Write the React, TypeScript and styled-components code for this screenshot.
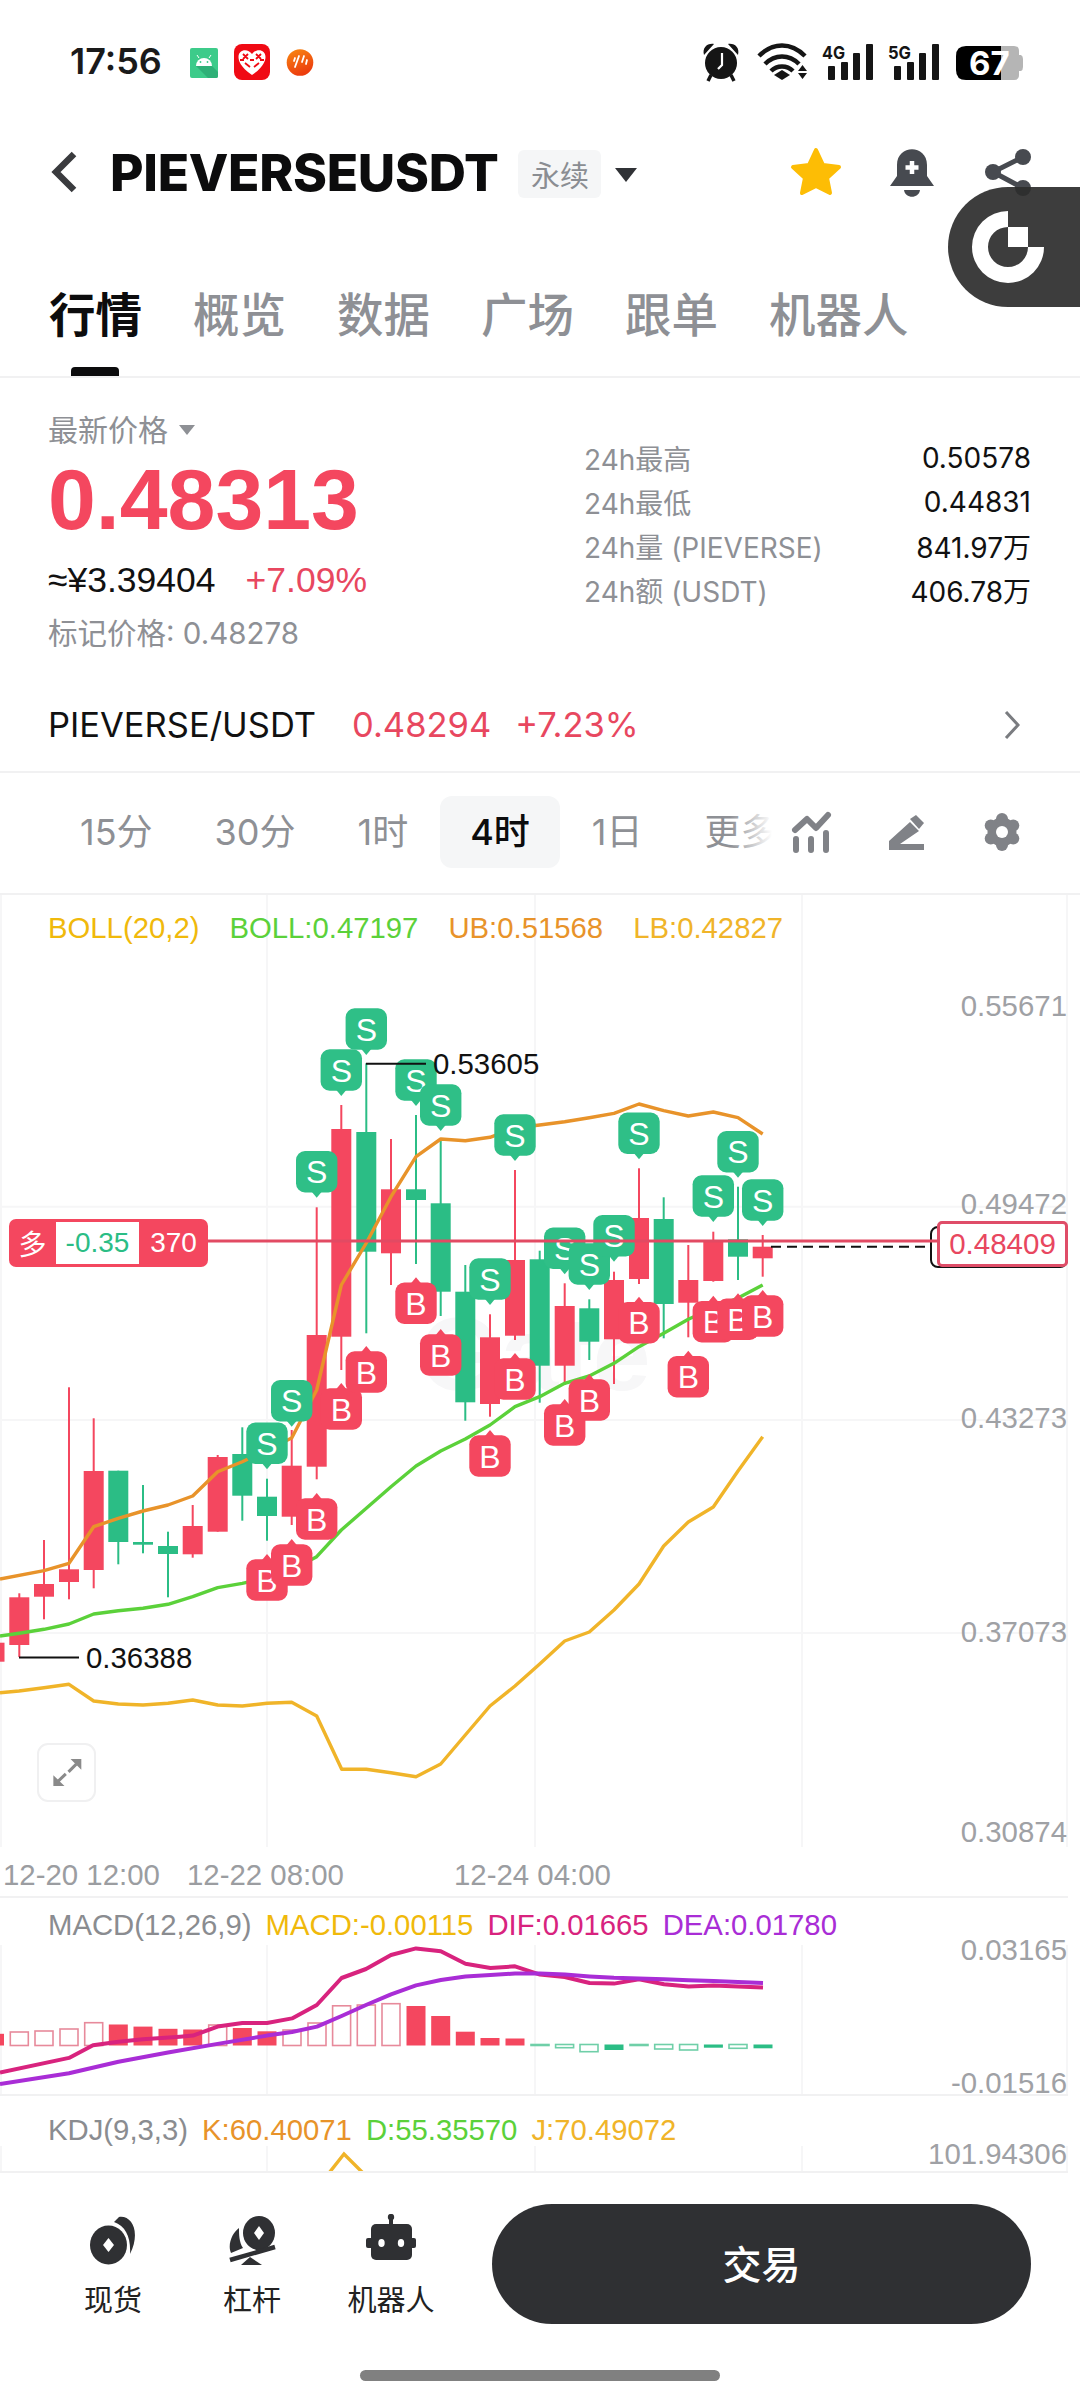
import React from 'react';
import styled, { createGlobalStyle } from 'styled-components';

const FONT = `Inter, 'Noto Sans CJK SC', sans-serif`;
const CHART_FONT = `'Liberation Sans', 'Noto Sans CJK SC', sans-serif`;
const RED = '#f4475f';
const TEXT_RED = '#e8475f';
const GREEN = '#2bbd85';
const GRAY = '#8e9095';
const LINE = '#f1f1f2';
const ORANGE = '#e8932a';
const LIME = '#5bd13a';
const YELLOW = '#f0b429';
const PINK = '#d8237e';
const PURPLE = '#a92dd6';

const GlobalStyle = createGlobalStyle`
    html, body {
        margin: 0;
        padding: 0;
        background: #fff;
    }
    * {
        box-sizing: border-box;
    }
`;

const Page = styled.div`
    position: relative;
    width: 1080px;
    height: 2400px;
    overflow: hidden;
    background: #fff;
    font-family: ${FONT};
    color: #111;
`;

const StatusBar = styled.div`
    height: 122px;
`;
const Icons = styled.svg`
    display: block;
    text {
        font-family: ${FONT};
    }
`;

const Header = styled.div`
    height: 100px;
    display: flex;
    align-items: center;
    padding-left: 48px;
`;
const Symbol = styled.div`
    margin-left: 32px;
    font-size: 51.5px;
    font-weight: 800;
    letter-spacing: -0.3px;
    color: #0c0c0d;
`;
const Tag = styled.div`
    margin: 4px 0 0 20px;
    width: 83px;
    height: 48px;
    display: flex;
    align-items: center;
    justify-content: center;
    border-radius: 6px;
    background: #f5f6f7;
    color: #8a8d92;
    font-size: 29px;
`;
const Caret = styled.div<{ $size: number; $color: string }>`
    width: 0;
    height: 0;
    border-left: ${p => p.$size}px solid transparent;
    border-right: ${p => p.$size}px solid transparent;
    border-top: ${p => p.$size * 1.25}px solid ${p => p.$color};
`;
const TagCaret = styled(Caret)`
    margin: 6px 0 0 14px;
`;
const HeaderActions = styled.div`
    margin-left: auto;
`;

const Widget = styled.div`
    position: absolute;
    right: 0;
    top: 187px;
    width: 132px;
    height: 120px;
    border-radius: 60px 0 0 60px;
    background: rgba(44, 44, 45, 0.92);
`;

const Tabs = styled.div`
    height: 156px;
    display: flex;
    gap: 51px;
    padding: 62px 0 0 49px;
    border-bottom: 2px solid ${LINE};
`;
const Tab = styled.div<{ $active?: boolean }>`
    position: relative;
    height: 92px;
    line-height: 62px;
    font-size: 46.5px;
    font-weight: ${p => (p.$active ? 700 : 500)};
    color: ${p => (p.$active ? '#0c0c0d' : GRAY)};
    &::after {
        content: '';
        display: ${p => (p.$active ? 'block' : 'none')};
        position: absolute;
        left: 22px;
        bottom: 0;
        width: 48px;
        height: 9px;
        border-radius: 4px 4px 0 0;
        background: #0c0c0d;
    }
`;

const PriceSection = styled.div`
    height: 302px;
    display: flex;
    justify-content: space-between;
    padding: 32px 49px 0 48px;
`;
const PriceColumn = styled.div`
    display: flex;
    flex-direction: column;
`;
const PriceLabel = styled.div`
    height: 36px;
    display: flex;
    align-items: center;
    gap: 11px;
    font-size: 30px;
    color: ${GRAY};
`;
const SmallCaret = styled(Caret)`
    margin-top: 3px;
`;
const BigPrice = styled.div`
    margin-top: 5px;
    height: 96px;
    line-height: 96px;
    font-family: ${CHART_FONT};
    font-size: 86px;
    font-weight: 700;
    color: ${RED};
`;
const ChangeRow = styled.div`
    margin-top: 13px;
    height: 40px;
    line-height: 40px;
    display: flex;
    gap: 30px;
    font-family: ${CHART_FONT};
    font-size: 35.5px;
`;
const Up = styled.span`
    color: ${TEXT_RED};
`;
const MarkPrice = styled.div`
    margin-top: 15px;
    height: 36px;
    line-height: 36px;
    font-size: 29.5px;
    color: ${GRAY};
`;
const Stats = styled.div`
    width: 447px;
    padding-top: 26px;
`;
const StatRow = styled.div`
    height: 44px;
    display: flex;
    align-items: center;
    justify-content: space-between;
    font-size: 28px;
    color: #111;
    span:first-child {
        color: ${GRAY};
    }
`;

const SpotRow = styled.div`
    height: 93px;
    display: flex;
    align-items: center;
    gap: 36px;
    padding: 0 60px 2px 48px;
    border-bottom: 2px solid ${LINE};
    font-size: 34.5px;
    svg {
        margin-left: auto;
    }
`;
const SpotChange = styled(Up)`
    margin-left: -12px;
`;

const Toolbar = styled.div`
    position: relative;
    height: 122px;
    display: flex;
    align-items: center;
    padding: 0 0 2px 50px;
    border-bottom: 2px solid ${LINE};
`;
const Intervals = styled.div`
    position: relative;
    width: 722px;
    margin-right: 17px;
    display: flex;
    gap: 2px;
    overflow: hidden;
`;
const Interval = styled.div<{ $active?: boolean }>`
    flex: none;
    height: 72px;
    line-height: 72px;
    padding: 0 30px;
    border-radius: 12px;
    font-size: 36px;
    color: ${p => (p.$active ? '#0c0c0d' : GRAY)};
    background: ${p => (p.$active ? '#f5f6f7' : 'transparent')};
    font-weight: ${p => (p.$active ? 500 : 400)};
`;
const Fade = styled.div`
    position: absolute;
    right: 0;
    top: 0;
    bottom: 0;
    width: 42px;
    background: linear-gradient(to right, rgba(255, 255, 255, 0), #fff);
`;

const Pane = styled.div<{ $height: number }>`
    position: relative;
    width: 1068px;
    height: ${p => p.$height}px;
    border-bottom: 2px solid ${LINE};
    font-family: ${CHART_FONT};
`;
const PaneSvg = styled.svg`
    display: block;
    text {
        font-family: ${CHART_FONT};
    }
`;
const Legend = styled.div<{ $gap: number; $top: number }>`
    position: absolute;
    left: 48px;
    top: ${p => p.$top}px;
    display: flex;
    gap: ${p => p.$gap}px;
    font-size: 29.3px;
    line-height: 36px;
    white-space: nowrap;
`;
const LegendItem = styled.span<{ $color: string }>`
    color: ${p => p.$color};
`;

const PositionTag = styled.div`
    position: absolute;
    left: 9px;
    top: 324px;
    width: 199px;
    height: 48px;
    display: flex;
    align-items: center;
    border-radius: 7px;
    background: ${RED};
    color: #fff;
    font-size: 28px;
`;
const PositionSide = styled.div`
    width: 47px;
    text-align: center;
`;
const PositionPnl = styled.div`
    width: 83px;
    height: 42px;
    line-height: 42px;
    text-align: center;
    background: #fff;
    color: ${GREEN};
`;
const PositionQty = styled.div`
    flex: 1;
    text-align: center;
`;
const LastPrice = styled.div`
    position: absolute;
    left: 937px;
    top: 326px;
    width: 131px;
    height: 46px;
    line-height: 40px;
    text-align: center;
    border: 3px solid #df4d68;
    border-radius: 5px;
    background: #fff;
    color: ${TEXT_RED};
    font-size: 29.5px;
`;
const ExpandButton = styled.div`
    position: absolute;
    left: 37px;
    top: 848px;
    width: 59px;
    height: 59px;
    display: flex;
    align-items: center;
    justify-content: center;
    border: 2px solid #f0f0f1;
    border-radius: 11px;
    background: #fff;
`;

const BottomBar = styled.div`
    position: relative;
    height: 227px;
    display: flex;
    align-items: flex-start;
    padding-top: 31px;
`;
const Shortcuts = styled.div`
    width: 492px;
    margin-top: -19px;
    display: flex;
    padding: 29px 0 0 43.5px;
`;
const Shortcut = styled.div`
    width: 139px;
    display: flex;
    flex-direction: column;
    align-items: center;
    gap: 16.5px;
    font-size: 29px;
    line-height: 36px;
    color: #222;
`;
const TradeButton = styled.div`
    width: 539px;
    height: 120px;
    padding-bottom: 4px;
    border-radius: 60px;
    background: #2f3033;
    color: #fff;
    font-size: 39px;
    font-weight: 500;
    display: flex;
    align-items: center;
    justify-content: center;
`;
const HomeBar = styled.div`
    position: absolute;
    left: 360px;
    bottom: 19px;
    width: 360px;
    height: 11px;
    border-radius: 6px;
    background: #808080;
`;

type Candle = [number, number, number, number, number, 'r' | 'g'];

const CANDLES: Candle[] = [
    [-5.5, 1642.7, 1661.7, 1630, 1670, 'r'],
    [19.3, 1597.3, 1645, 1593.3, 1657, 'r'],
    [44, 1584, 1596.7, 1540, 1619.3, 'r'],
    [69, 1569.3, 1582, 1387.3, 1599.3, 'r'],
    [93.7, 1471, 1570, 1418.3, 1588.3, 'r'],
    [118.3, 1470.7, 1542, 1470.7, 1564.3, 'g'],
    [143, 1542, 1544.7, 1485, 1553.3, 'g'],
    [168, 1546, 1554, 1531.7, 1597.3, 'g'],
    [192.7, 1526, 1554.3, 1505, 1557.7, 'r'],
    [217.7, 1457, 1531.7, 1455, 1531.7, 'r'],
    [242.3, 1454, 1495.7, 1427.3, 1520.7, 'g'],
    [267, 1496.7, 1516, 1478.7, 1540.7, 'g'],
    [291.7, 1465.7, 1516.7, 1430, 1525, 'r'],
    [316.7, 1335, 1466.7, 1207.3, 1479.3, 'r'],
    [341.3, 1129, 1336.7, 1105, 1370, 'r'],
    [366.3, 1132, 1251.7, 1063.3, 1333.3, 'g'],
    [391, 1189.3, 1253.3, 1139, 1285, 'r'],
    [416, 1189.3, 1200, 1115, 1264, 'g'],
    [440.7, 1203.3, 1291.7, 1140, 1316, 'g'],
    [465.3, 1291.7, 1402.3, 1265, 1420.7, 'g'],
    [490, 1337.3, 1404, 1314.3, 1416.7, 'r'],
    [515, 1260, 1335.7, 1170, 1340, 'r'],
    [539.7, 1259.3, 1365.7, 1250.7, 1402.7, 'g'],
    [564.7, 1306, 1365.7, 1283.3, 1385, 'r'],
    [589.3, 1308.3, 1341.7, 1299.3, 1360, 'g'],
    [614, 1280, 1339.3, 1271.7, 1384, 'r'],
    [639, 1218, 1279, 1168.3, 1284, 'r'],
    [663.7, 1219, 1304, 1197.3, 1338.3, 'g'],
    [688.3, 1280, 1302.7, 1245, 1337.3, 'r'],
    [713.3, 1241, 1281, 1231.7, 1281.7, 'r'],
    [738, 1239.3, 1256.7, 1186.7, 1280, 'g'],
    [762.7, 1246.7, 1258.3, 1235, 1276.7, 'r'],
];

const UPPER = '0,1579 44,1570.7 69,1563.3 93.7,1526.7 118.3,1518.3 143,1511 168,1505 192.7,1496 217.7,1471.7 242.3,1461.7 267,1450 291.7,1438 316.7,1390 341.3,1285 366.3,1243 391,1196.7 416,1156.7 440.7,1139 465.3,1140.7 490,1137.3 515,1128 539.7,1125 564.7,1121.7 589.3,1117.7 614,1113.3 639,1104 663.7,1110.7 688.3,1116 713.3,1112 738,1117.7 762.7,1134';
const MIDDLE = '0,1636 19.3,1633.3 44,1629.3 69,1624 93.7,1614 118.3,1610.7 143,1608.3 168,1604.3 192.7,1596.7 217.7,1587.7 242.3,1583.3 267,1578 291.7,1570 316.7,1556.7 341.3,1530 366.3,1508.3 391,1486.7 416,1466 440.7,1451 465.3,1439 490,1425 515,1406.7 539.7,1396.7 564.7,1383.3 589.3,1376 614,1363.3 639,1346.7 663.7,1333.3 688.3,1319.3 713.3,1308 738,1298 762.7,1285';
const LOWER = '0,1692.7 19,1691 44,1687.7 69,1684.3 93.7,1701 118.3,1704 143,1705 168,1703.3 192.7,1700 217.7,1705 242.3,1706 267,1703.3 291.7,1702.3 316.7,1716 341.7,1769.3 366.3,1769.3 391,1772.7 416,1776.7 440.7,1764 465.3,1735 490,1706 515,1686 539.7,1664 564.7,1641 589.3,1632 614,1610 639,1584 663.7,1546 688.3,1522 713.3,1507 738,1471 762.7,1436.7';

const DIF = '0,2072.6 69,2057.9 93,2045.3 118.5,2041.7 143,2039.2 180,2036.7 193,2035.6 217.6,2026.6 242.4,2023 267,2023 292,2018.4 316.8,2005 341.6,1978 366,1969 391,1955 416,1948.4 440.8,1951.3 465.5,1963.8 490.4,1968 515,1966.3 540,1974.6 564.7,1977 589.6,1983 614,1983.6 639,1979.3 664,1984.3 688.7,1986.4 713.5,1985.4 738,1986.4 763,1987.5';
const DEA = '0,2084 69,2073.3 118.5,2061.8 168,2052.5 217.6,2043.9 267,2035.6 292,2032 317,2026.6 341.6,2016 366,2005 391,1994.3 416,1985.4 440.8,1980 465.5,1976.4 490.4,1975 515,1973.5 540,1973.5 565,1974.6 589.6,1976.4 614,1977.8 639,1978.5 664,1979.3 688.7,1980.3 713.5,1981 738,1982 763,1983';

// x, y of the marker body centre, drawn left to right
const MARKERS: [number, number, 'S' | 'B'][] = [
    [267, 1580, 'B'],
    [267, 1443.3, 'S'],
    [291.7, 1565, 'B'],
    [291.7, 1400.7, 'S'],
    [316.7, 1519, 'B'],
    [316.7, 1171.7, 'S'],
    [341.3, 1409, 'B'],
    [341.3, 1070, 'S'],
    [366.3, 1372, 'B'],
    [366.3, 1029, 'S'],
    [416, 1303.3, 'B'],
    [416, 1080, 'S'],
    [440.7, 1355, 'B'],
    [440.7, 1105, 'S'],
    [490, 1456, 'B'],
    [490, 1279, 'S'],
    [515, 1379, 'B'],
    [515, 1135, 'S'],
    [564.7, 1425, 'B'],
    [564.7, 1248.3, 'S'],
    [589.3, 1400, 'B'],
    [589.3, 1264, 'S'],
    [614, 1235.7, 'S'],
    [639, 1322.7, 'B'],
    [639, 1133.3, 'S'],
    [688.3, 1376.7, 'B'],
    [713.3, 1321.7, 'B'],
    [713.3, 1196, 'S'],
    [738, 1319.3, 'B'],
    [738, 1151.7, 'S'],
    [762.7, 1316, 'B'],
    [762.7, 1200, 'S'],
];

// x, top, hollow
const RED_BARS: [number, number, boolean][] = [
    [-5.5, 2033.8, false],
    [19.3, 2032, true],
    [44, 2031, true],
    [69, 2029, true],
    [93.7, 2022.7, true],
    [118.3, 2024.5, false],
    [143, 2026.6, false],
    [168, 2028.8, false],
    [192.7, 2029.5, false],
    [217.7, 2025, true],
    [242.3, 2028, false],
    [267, 2031.3, false],
    [292, 2030, true],
    [317, 2023, true],
    [341.6, 2005.8, true],
    [366.3, 2005, true],
    [391, 2003.7, true],
    [416, 2006, false],
    [440.7, 2016, false],
    [465.3, 2031.7, false],
    [490, 2038, false],
    [515, 2038.5, false],
];
const GREEN_BARS: [number, number, boolean][] = [
    [540, 2045.5, true],
    [564.6, 2047.7, true],
    [589, 2051.7, true],
    [614, 2050, false],
    [639, 2045.5, true],
    [663.7, 2049, true],
    [688.6, 2050, true],
    [713.4, 2047.7, false],
    [738, 2048.3, true],
    [763, 2048.3, false],
];

const Marker = ({ x, y, kind }: { x: number; y: number; kind: 'S' | 'B' }) => {
    const tail = kind === 'S' ? `M${x - 5} ${y + 20}L${x} ${y + 26}L${x + 5} ${y + 20}Z` : `M${x - 5} ${y - 20}L${x} ${y - 26}L${x + 5} ${y - 20}Z`;
    const fill = kind === 'S' ? '#2fbf87' : RED;
    return (
        <g>
            <rect x={x - 20.7} y={y - 20.7} width={41.4} height={41.4} rx={9} fill={fill} />
            <path d={tail} fill={fill} />
            <text x={x} y={y + 11.5} textAnchor="middle" fontSize={32} fill="#fff">
                {kind}
            </text>
        </g>
    );
};

const AxisLabel = ({ y, children }: { y: number; children: string }) => (
    <text x={1067} y={y} textAnchor="end" fontSize={29.4} fill="#9fa1a5">
        {children}
    </text>
);

const Grid = ({ top, bottom, rows }: { top: number; bottom: number; rows: number[] }) => (
    <g stroke="#f6f6f7" strokeWidth={2}>
        {[1, 267, 535, 802, 1067].map(x => (
            <line key={x} x1={x} x2={x} y1={top} y2={bottom} />
        ))}
        {rows.map(y => (
            <line key={y} x1={0} x2={1068} y1={y} y2={y} />
        ))}
    </g>
);

const MainChart = () => (
    <PaneSvg width={1068} height={1001} viewBox="0 895 1068 1001">
        <Grid top={895} bottom={1847} rows={[1206.7, 1420, 1633]} />
        <text x={535} y={1390} textAnchor="middle" fontSize={104} fontWeight={700} fill="#f7f7f8">
            Gate
        </text>
        {CANDLES.map(([x, top, bottom, wickTop, wickBottom, side]) => (
            <g key={x} fill={side === 'r' ? RED : GREEN}>
                <rect x={x - 1} y={wickTop} width={2} height={wickBottom - wickTop} />
                <rect x={x - 10} y={top} width={20} height={bottom - top} />
            </g>
        ))}
        <polyline points={LOWER} fill="none" stroke={YELLOW} strokeWidth={3.4} strokeLinejoin="round" />
        <polyline points={MIDDLE} fill="none" stroke={LIME} strokeWidth={3.4} strokeLinejoin="round" />
        <polyline points={UPPER} fill="none" stroke={ORANGE} strokeWidth={3.4} strokeLinejoin="round" />
        {MARKERS.map(([x, y, kind]) => (
            <Marker key={`${x}${kind}`} x={x} y={y} kind={kind} />
        ))}
        <line x1={366} x2={426} y1={1063.7} y2={1063.7} stroke="#111" strokeWidth={2} />
        <text x={433} y={1074} fontSize={29.4} fill="#111">
            0.53605
        </text>
        <line x1={19} x2={79} y1={1657.5} y2={1657.5} stroke="#111" strokeWidth={2} />
        <text x={86} y={1668} fontSize={29.4} fill="#111">
            0.36388
        </text>
        <line x1={771} x2={932} y1={1246.7} y2={1246.7} stroke="#111" strokeWidth={2} strokeDasharray="10 6" />
        <rect x={931} y={1227} width={136} height={40} rx={7} fill="#fff" stroke="#111" strokeWidth={2} />
        <line x1={208} x2={937} y1={1241} y2={1241} stroke="#e24a63" strokeWidth={3} />
        <AxisLabel y={1016}>0.55671</AxisLabel>
        <AxisLabel y={1214}>0.49472</AxisLabel>
        <AxisLabel y={1428}>0.43273</AxisLabel>
        <AxisLabel y={1642}>0.37073</AxisLabel>
        <AxisLabel y={1842}>0.30874</AxisLabel>
        <g fontSize={29.4} fill="#9b9da1">
            <text x={3} y={1885}>12-20 12:00</text>
            <text x={187} y={1885}>12-22 08:00</text>
            <text x={454} y={1885}>12-24 04:00</text>
        </g>
    </PaneSvg>
);

const MacdChart = () => (
    <PaneSvg width={1068} height={196} viewBox="0 1898 1068 196">
        <Grid top={1945} bottom={2094} rows={[]} />
        {RED_BARS.map(([x, top, hollow]) =>
            hollow ? (
                <rect key={x} x={x - 9} y={top} width={18} height={2045.5 - top} fill="none" stroke="#e78a9b" strokeWidth={1.6} />
            ) : (
                <rect key={x} x={x - 9.5} y={top} width={19} height={2045.5 - top} fill={RED} />
            ),
        )}
        {GREEN_BARS.map(([x, bottom, hollow]) =>
            hollow ? (
                <rect key={x} x={x - 9} y={2044.5} width={18} height={bottom - 2044.5} fill="none" stroke="#6fcfa8" strokeWidth={1.6} />
            ) : (
                <rect key={x} x={x - 9.5} y={2044.5} width={19} height={bottom - 2044.5} fill={GREEN} />
            ),
        )}
        <polyline points={DIF} fill="none" stroke={PINK} strokeWidth={4} strokeLinejoin="round" />
        <polyline points={DEA} fill="none" stroke={PURPLE} strokeWidth={4} strokeLinejoin="round" />
        <AxisLabel y={1960}>0.03165</AxisLabel>
        <AxisLabel y={2093}>-0.01516</AxisLabel>
    </PaneSvg>
);

const KdjChart = () => (
    <PaneSvg width={1068} height={75} viewBox="0 2096 1068 75">
        <Grid top={2146} bottom={2171} rows={[]} />
        <polyline points="329,2173 344,2154 363,2173" fill="none" stroke={YELLOW} strokeWidth={3.4} />
        <AxisLabel y={2164}>101.94306</AxisLabel>
    </PaneSvg>
);

const StatusIcons = () => (
    <Icons width={1080} height={122} viewBox="0 0 1080 122">
        <text x={70} y={74} fontSize={36} fontWeight={600} fill="#1a1a1a">
            17:56
        </text>
        {/* android */}
        <rect x={190} y={48} width={28} height={30} rx={2} fill="#3dcb8a" />
        <path d="M196 66L212 66L218 72V76Q218 78 216 78H208Z" fill="#2fb077" />
        <path d="M196 66a8 8 0 0 1 16 0Z" fill="#fff" />
        <path d="M199 58l-2-3M209 58l2-3" stroke="#fff" strokeWidth={1} />
        <circle cx={200.5} cy={62} r={0.9} fill="#3dcb8a" />
        <circle cx={207.5} cy={62} r={0.9} fill="#3dcb8a" />
        {/* red app */}
        <rect x={234} y={44} width={36} height={36} rx={8} fill="#f00a14" />
        <path d="M252 75C240 67 238.5 60 238.5 57C238.5 49 248 48 252 54C256 48 265.5 49 265.5 57C265.5 60 264 67 252 75Z" fill="#fff" />
        <path d="M243 54l5 5M248 54l-5 5M256 54l5 5M261 54l-5 5M245 63l5 4M254 67l5-4M250 60h4M240 60h4M260 60h4" stroke="#f00a14" strokeWidth={1.8} />
        {/* orange app */}
        <defs>
            <linearGradient id="orange" x1="0" y1="0" x2="0.4" y2="1">
                <stop offset="0" stopColor="#f98a12" />
                <stop offset="1" stopColor="#ec3d0e" />
            </linearGradient>
        </defs>
        <circle cx={300} cy={62.5} r={13.3} fill="url(#orange)" />
        <path d="M295 58l-1 3M299 56l-4 11M304 56l-2 6M307 60l-1 4" stroke="#fff" strokeWidth={1.8} strokeLinecap="round" />
        {/* alarm */}
        <circle cx={721} cy={63} r={16} fill="#151515" />
        <path d="M704 55C702 48 707 43 714 44Z M738 55C740 48 735 43 728 44Z" fill="#151515" />
        <path d="M711 75l-3 6M731 75l3 6" stroke="#151515" strokeWidth={3.5} />
        <path d="M722 53v12l-4 4" fill="none" stroke="#fff" strokeWidth={2.2} />
        {/* wifi */}
        <g fill="none" stroke="#151515" strokeWidth={4.5}>
            <path d="M759 56C773 42 791 42 805 56" />
            <path d="M765 64C775 54 789 54 799 64" />
            <path d="M771 71C777 65 787 65 793 71" />
        </g>
        <path d="M782 70L790 75L782 80L774 75Z" fill="#151515" />
        <path d="M798 71h9l-4.5-6ZM798 73h9l-4.5 6Z" fill="#151515" />
        {[822, 888].map((x, i) => (
            <g key={x} fill="#151515">
                <text x={x} y={59} fontSize={18} fontWeight={700} textLength={23} lengthAdjust="spacingAndGlyphs">
                    {i === 0 ? '4G' : '5G'}
                </text>
                <rect x={x + 6} y={66} width={7} height={14} rx={1} />
                <rect x={x + 19} y={62} width={7} height={18} rx={1} />
                <rect x={x + 31} y={53} width={7} height={27} rx={1} />
                <rect x={x + 44} y={44} width={7} height={36} rx={1} />
            </g>
        ))}
        {/* battery */}
        <path d="M1001 46H1014Q1019 46 1019 51V55H1021Q1023 56 1023 59V67Q1023 70 1021 71H1019V75Q1019 80 1014 80H1001Z" fill="#b5b5b5" />
        <path d="M1001 46H966Q956 46 956 56V70Q956 80 966 80H1001Z" fill="#000" />
        <text x={969} y={75} fontSize={33} fontWeight={700} fill="#fff">
            67
        </text>
    </Icons>
);

const HeaderIcons = () => (
    <Icons width={300} height={100} viewBox="780 122 300 100">
        <polygon points="816,150 823,165 839,167 827,178 830,193 816,186 802,193 805,178 793,167 809,165" fill="#fdbd05" stroke="#fdbd05" strokeWidth={4} strokeLinejoin="round" />
        <path d="M890 186L897 176V165C897 144 927 144 927 165V176L934 186Z" fill="#474a50" />
        <path d="M904 190H920C919 199 905 199 904 190Z" fill="#474a50" />
        <path d="M912 161v13M905.5 167.5h13" stroke="#fff" strokeWidth={4.5} />
        <path d="M1023 157L993 172L1023 188" fill="none" stroke="#474a50" strokeWidth={5} />
        <circle cx={1023} cy={157} r={8} fill="#474a50" />
        <circle cx={993} cy={172} r={8} fill="#474a50" />
        <circle cx={1023} cy={188} r={8} fill="#474a50" />
    </Icons>
);

const GEAR_LOBES = [0, 1, 2, 3, 4, 5].map(i => {
    const a = (i * Math.PI) / 3 - Math.PI / 2;
    return [20 + 13 * Math.cos(a), 20 + 13 * Math.sin(a)];
});

const ToolIcons = () => (
    <Icons width={250} height={44} viewBox="0 0 250 44">
        <g fill="none" stroke="#808287" strokeWidth={6} strokeLinecap="round" strokeLinejoin="round">
            <polyline points="6,20 18,9 27,18 39,5" />
            <path d="M7 29v11M22 29v11M37 23v17" />
        </g>
        <path d="M100 31L121 12L130 21L111 34H135V40H100Z" fill="#808287" strokeLinejoin="round" />
        <path d="M121 9L127 5L135 13L130 19Z" fill="#808287" />
        <g transform="translate(193 2)" fill="#808287">
            <circle cx={20} cy={20} r={14.5} />
            {GEAR_LOBES.map(([x, y]) => (
                <circle key={x * y} cx={x} cy={y} r={6} />
            ))}
            <circle cx={20} cy={20} r={6} fill="#fff" />
        </g>
    </Icons>
);

const CoinIcon = () => (
    <Icons width={48} height={52} viewBox="90 2214 48 52">
        <ellipse cx={109.5} cy={2245} rx={18.5} ry={19.5} fill="#2f3033" />
        <path d="M109.5 2238L115 2245L109.5 2252L104 2245Z" fill="#fff" />
        <path d="M120 2217C133 2215 142 2232 131 2254C132 2238 127 2226 115 2222Z" fill="#2f3033" />
    </Icons>
);
const LeverageIcon = () => (
    <Icons width={48} height={52} viewBox="229 2214 48 52">
        <ellipse cx={260} cy={2233} rx={16} ry={17} fill="#2f3033" />
        <path d="M260 2226L265 2233L260 2240L255 2233Z" fill="#fff" />
        <path d="M240 2228C234 2232 228 2244 232 2253L244 2248C240 2242 240 2234 240 2228Z" fill="#2f3033" />
        <path d="M231 2260L276 2247" stroke="#2f3033" strokeWidth={4.5} />
        <path d="M251 2257L263 2265H242Z" fill="#2f3033" />
    </Icons>
);
const RobotIcon = () => (
    <Icons width={50} height={52} viewBox="365 2214 50 52">
        <path d="M390 2217V2226" stroke="#2f3033" strokeWidth={4} />
        <circle cx={390} cy={2217} r={3.2} fill="#2f3033" />
        <rect x={370} y={2224} width={41} height={36} rx={5} fill="#2f3033" />
        <rect x={365} y={2238} width={50} height={10} rx={2} fill="#2f3033" />
        <ellipse cx={380.5} cy={2243} rx={3.2} ry={4} fill="#fff" />
        <ellipse cx={400} cy={2243} rx={3.2} ry={4} fill="#fff" />
    </Icons>
);

const App = () => (
    <Page>
        <GlobalStyle />
        <StatusBar>
            <StatusIcons />
        </StatusBar>
        <Header>
            <svg width="30" height="42" viewBox="0 0 30 42">
                <path d="M26 3L8 21L26 39" fill="none" stroke="#3a3b3e" strokeWidth={6.5} />
            </svg>
            <Symbol>PIEVERSEUSDT</Symbol>
            <Tag>永续</Tag>
            <TagCaret $size={11.5} $color="#303236" />
            <HeaderActions>
                <HeaderIcons />
            </HeaderActions>
        </Header>
        <Widget>
            <svg width="132" height="120" viewBox="948 187 132 120">
                <path d="M1008 211A36 36 0 1 0 1044 247H1028A20 20 0 1 1 1008 227Z" fill="#fff" />
                <rect x={1008} y={227} width={20} height={20} fill="#fff" />
            </svg>
        </Widget>
        <Tabs>
            <Tab $active>行情</Tab>
            <Tab>概览</Tab>
            <Tab>数据</Tab>
            <Tab>广场</Tab>
            <Tab>跟单</Tab>
            <Tab>机器人</Tab>
        </Tabs>
        <PriceSection>
            <PriceColumn>
                <PriceLabel>
                    最新价格
                    <SmallCaret $size={8} $color="#8e9095" />
                </PriceLabel>
                <BigPrice>0.48313</BigPrice>
                <ChangeRow>
                    <span>≈¥3.39404</span>
                    <Up>+7.09%</Up>
                </ChangeRow>
                <MarkPrice>标记价格: 0.48278</MarkPrice>
            </PriceColumn>
            <Stats>
                <StatRow>
                    <span>24h最高</span>
                    <span>0.50578</span>
                </StatRow>
                <StatRow>
                    <span>24h最低</span>
                    <span>0.44831</span>
                </StatRow>
                <StatRow>
                    <span>24h量 (PIEVERSE)</span>
                    <span>841.97万</span>
                </StatRow>
                <StatRow>
                    <span>24h额 (USDT)</span>
                    <span>406.78万</span>
                </StatRow>
            </Stats>
        </PriceSection>
        <SpotRow>
            <span>PIEVERSE/USDT</span>
            <Up>0.48294</Up>
            <SpotChange>+7.23%</SpotChange>
            <svg width="16" height="28" viewBox="0 0 16 28">
                <path d="M2 1L14 14L2 27" fill="none" stroke="#7a7c80" strokeWidth={3} />
            </svg>
        </SpotRow>
        <Toolbar>
            <Intervals>
                <Interval>15分</Interval>
                <Interval>30分</Interval>
                <Interval>1时</Interval>
                <Interval $active>4时</Interval>
                <Interval>1日</Interval>
                <Interval>更多</Interval>
                <Fade />
            </Intervals>
            <ToolIcons />
        </Toolbar>
        <Pane $height={1003}>
            <MainChart />
            <Legend $gap={30} $top={15}>
                <LegendItem $color="#f0b90b">BOLL(20,2)</LegendItem>
                <LegendItem $color={LIME}>BOLL:0.47197</LegendItem>
                <LegendItem $color={ORANGE}>UB:0.51568</LegendItem>
                <LegendItem $color={YELLOW}>LB:0.42827</LegendItem>
            </Legend>
            <PositionTag>
                <PositionSide>多</PositionSide>
                <PositionPnl>-0.35</PositionPnl>
                <PositionQty>370</PositionQty>
            </PositionTag>
            <LastPrice>0.48409</LastPrice>
            <ExpandButton>
                <svg width="32" height="31" viewBox="150 172 95 92">
                    <path d="M240 178H208L240 210ZM157 258V226L190 258Z" fill="#8a8a8a" />
                    <path d="M225 193L202 216M170 245L194 222" stroke="#8a8a8a" strokeWidth={9} />
                </svg>
            </ExpandButton>
        </Pane>
        <Pane $height={198}>
            <MacdChart />
            <Legend $gap={14} $top={9}>
                <LegendItem $color="#8a8c90">MACD(12,26,9)</LegendItem>
                <LegendItem $color="#f0b90b">MACD:-0.00115</LegendItem>
                <LegendItem $color={PINK}>DIF:0.01665</LegendItem>
                <LegendItem $color={PURPLE}>DEA:0.01780</LegendItem>
            </Legend>
        </Pane>
        <Pane $height={77}>
            <KdjChart />
            <Legend $gap={14} $top={16}>
                <LegendItem $color="#8a8c90">KDJ(9,3,3)</LegendItem>
                <LegendItem $color={ORANGE}>K:60.40071</LegendItem>
                <LegendItem $color={LIME}>D:55.35570</LegendItem>
                <LegendItem $color={YELLOW}>J:70.49072</LegendItem>
            </Legend>
        </Pane>
        <BottomBar>
            <Shortcuts>
                <Shortcut>
                    <CoinIcon />
                    现货
                </Shortcut>
                <Shortcut>
                    <LeverageIcon />
                    杠杆
                </Shortcut>
                <Shortcut>
                    <RobotIcon />
                    机器人
                </Shortcut>
            </Shortcuts>
            <TradeButton>交易</TradeButton>
            <HomeBar />
        </BottomBar>
    </Page>
);

export default App;
